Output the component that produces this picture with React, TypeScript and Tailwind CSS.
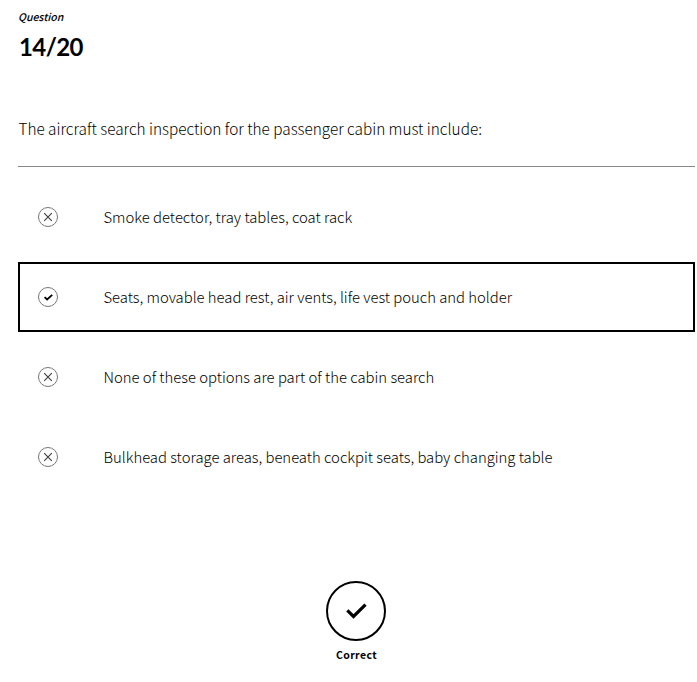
import React from "react";

type Answer = { text: string; correct?: boolean };

const answers: Answer[] = [
  { text: "Smoke detector, tray tables, coat rack" },
  { text: "Seats, movable head rest, air vents, life vest pouch and holder", correct: true },
  { text: "None of these options are part of the cabin search" },
  { text: "Bulkhead storage areas, beneath cockpit seats, baby changing table" },
];

function StatusIcon({ correct }: { correct?: boolean }) {
  return (
    <svg viewBox="0 0 20 20" className="h-5 w-5 shrink-0" fill="none">
      <circle cx="10" cy="10" r="9.5" stroke="#777" />
      {correct ? (
        <path d="M6.6 10.2l2.5 2.3L14.2 7.9" stroke="#000" strokeWidth="1.8" />
      ) : (
        <path d="M6.2 6.2l7.6 7.6M13.8 6.2l-7.6 7.6" stroke="#3a3f45" strokeWidth="1.1" />
      )}
    </svg>
  );
}

export default function App() {
  return (
    <main className="flex h-[682px] w-[697px] flex-col overflow-hidden bg-white pl-[18px] pr-[2px] font-['Noto_Sans_CJK_SC','Noto_Sans',sans-serif] font-light whitespace-nowrap text-black">
      <header className="flex flex-col items-start pt-[9px]">
        <span className="text-[10.5px] leading-4 font-medium italic">Question</span>
        <span className="mt-[6px] ml-px font-['Lato',sans-serif] text-[24px] leading-8 font-bold tracking-[-0.6px]">14/20</span>
      </header>
      <h1 className="mt-[53px] flex h-[51px] border-b border-[#888]">
        <span className="ml-[0.5px] text-[15.33px] leading-6">The aircraft search inspection for the passenger cabin must include:</span>
      </h1>
      <ul className="mt-[15px] flex flex-col gap-[10px] text-[14.84px]">
        {answers.map((a) => (
          <li key={a.text} className={`flex h-[70px] items-center border-2 pl-[18px] ${a.correct ? "border-black" : "border-transparent"}`}>
            <StatusIcon correct={a.correct} />
            <span className="ml-[45.5px]">{a.text}</span>
          </li>
        ))}
      </ul>
      <footer className="mt-[89px] flex flex-col items-center pr-px">
        <svg viewBox="0 0 60 60" className="h-[60px] w-[60px]" fill="none">
          <circle cx="30" cy="30" r="29" stroke="#000" strokeWidth="2" />
          <path d="M21.3 29.4l6.2 6.1L39.5 23.7" stroke="#000" strokeWidth="3.2" />
        </svg>
        <span className="mt-[6px] ml-px text-[10.5px] leading-4 font-bold tracking-[0.4px]">Correct</span>
      </footer>
    </main>
  );
}
